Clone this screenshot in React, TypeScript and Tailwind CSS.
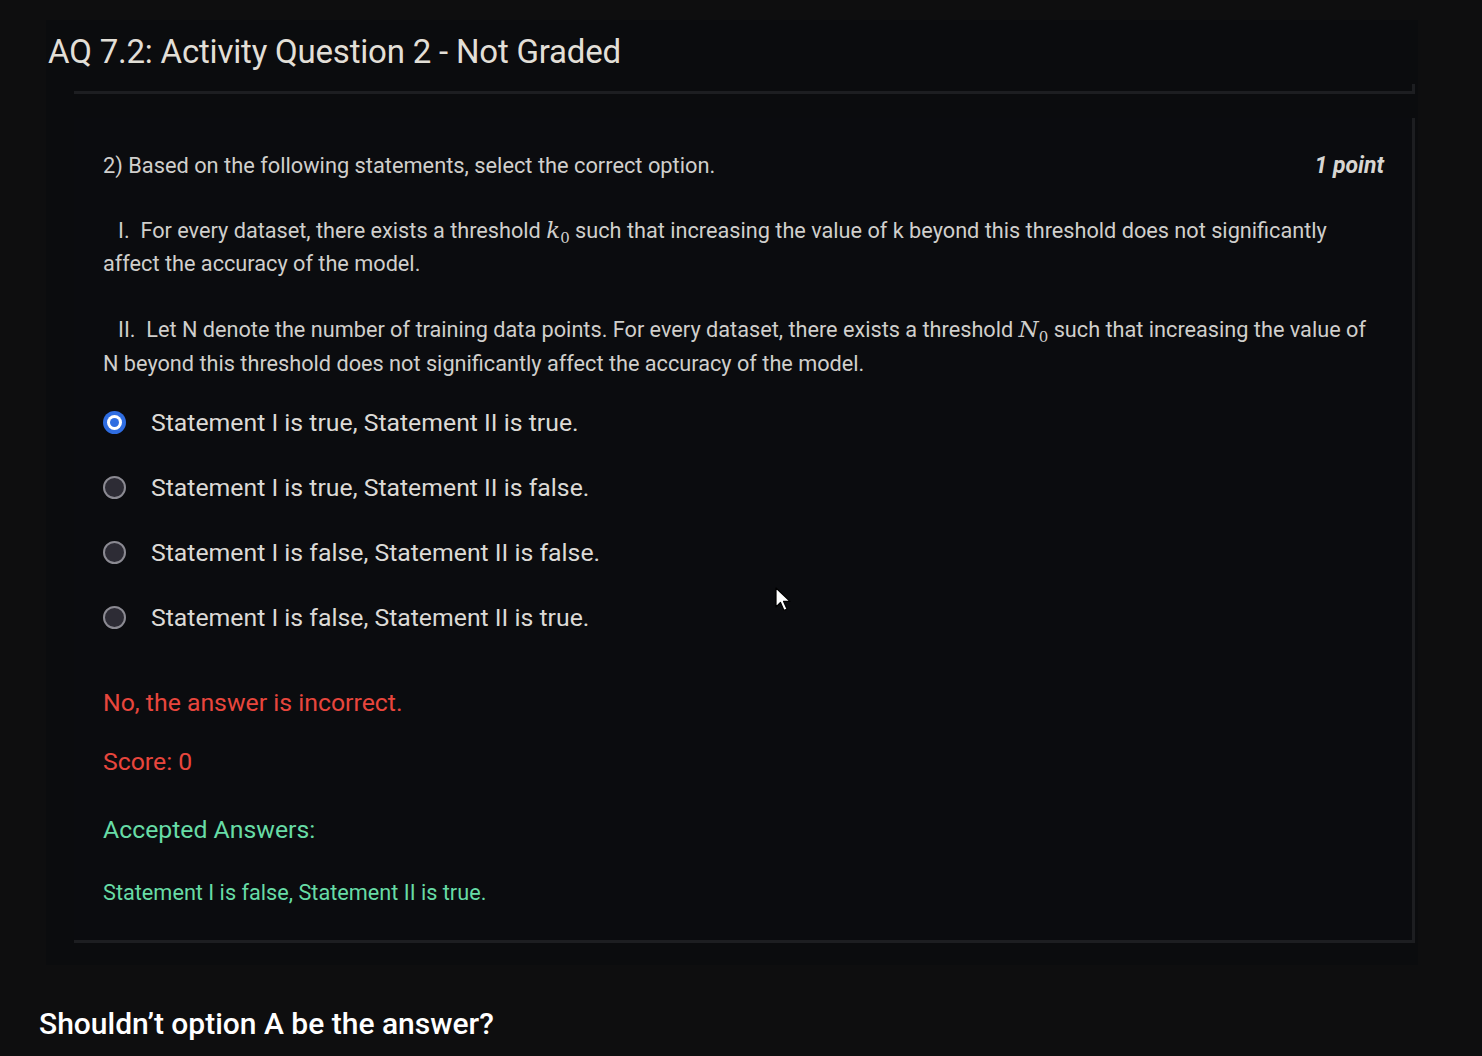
import React from "react";

function Radio({ selected }: { selected?: boolean }) {
  if (selected) {
    return (
      <span className="flex h-[23px] w-[23px] items-center justify-center rounded-full bg-[#2f6de1]">
        <span className="flex h-[15px] w-[15px] items-center justify-center rounded-full bg-white">
          <span className="h-[9px] w-[9px] rounded-full bg-[#2f6de1]" />
        </span>
      </span>
    );
  }
  return <span className="h-[23px] w-[23px] rounded-full border-[2.5px] border-[#8b8a92] bg-[#2d2c35]" />;
}

function M({ base }: { base: string }) {
  return (
    <span className="whitespace-nowrap leading-[0]" style={{ fontFamily: '"DejaVu Serif", "Liberation Serif", serif' }}>
      <span className="italic text-[23px] leading-[0]">{base}</span>
      <span className="relative top-[5px] text-[15px] leading-[0]">0</span>
    </span>
  );
}

export default function App() {
  const options = [
    { t: "Statement I is true, Statement II is true.", s: true },
    { t: "Statement I is true, Statement II is false." },
    { t: "Statement I is false, Statement II is false." },
    { t: "Statement I is false, Statement II is true." },
  ];
  return (
    <div
      className="relative min-h-[1056px] w-full overflow-hidden bg-[#0e0e0f] pt-[20px]"
      style={{ fontFamily: 'Roboto, "Liberation Sans", sans-serif' }}
    >
      <div className="ml-[46px] mr-[64px] bg-[#0b0c0e] pb-[22px]">
        <h1 className="pl-[2px] text-[33px] leading-[64px] tracking-[-0.2px] text-[#e2dfd7]">
          AQ 7.2: Activity Question 2 - Not Graded
        </h1>
        <div className="ml-[28px] mr-[3px] h-[10px] border-b-[3px] border-r-[3px] border-[#1d1e21]" />
        <div className="ml-[28px] mr-[3px] mt-[24px] border-b-[3px] border-r-[3px] border-[#1d1e21] bg-[#0b0c0f] pl-[29px] pr-[28px] pb-[30px] pt-[33px] text-[#d0cfcc]">
          <div className="flex items-center justify-between text-[21.8px] leading-[30px]">
            <span>2) Based on the following statements, select the correct option.</span>
            <span className="text-[23px] font-bold italic text-[#d8d6d2]">1 point</span>
          </div>
          <p className="mt-[33px] text-[21.7px] leading-[33px]">
            <span className="pl-[15px]">I.&nbsp; For every dataset, there exists a threshold </span>
            <M base="k" /> such that increasing the value of k beyond this threshold does not significantly affect the
            accuracy of the model.
          </p>
          <p className="mt-[33px] text-[21.7px] leading-[34px]">
            <span className="pl-[15px]">II.&nbsp; Let N denote the number of training data points. For every dataset, there exists a threshold </span>
            <M base="N" /> such that increasing the value of N beyond this threshold does not significantly affect the
            accuracy of the model.
          </p>
          <div className="mt-[25px] flex flex-col gap-[32px]">
            {options.map((o, i) => (
              <div key={i} className="flex h-[33px] items-center">
                <span className="flex w-[48px] items-center">
                  <Radio selected={o.s} />
                </span>
                <span className="text-[24.8px] text-[#dcdad6]">{o.t}</span>
              </div>
            ))}
          </div>
          <p className="mt-[52px] text-[24.8px] leading-[34px] text-[#e8463d]">No, the answer is incorrect.</p>
          <p className="mt-[25px] text-[24.8px] leading-[34px] text-[#e8463d]">Score: 0</p>
          <p className="mt-[34px] text-[24.8px] leading-[34px] text-[#67dca6]">Accepted Answers:</p>
          <p className="mt-[29px] text-[21.7px] leading-[34px] text-[#67dca6]">Statement I is false, Statement II is true.</p>
        </div>
      </div>
      <p className="ml-[39px] mt-[39px] text-[30px] font-medium leading-[40px] text-white">
        Shouldn’t option A be the answer?
      </p>
      <svg
        className="absolute left-[775px] top-[587px]"
        width="20"
        height="28"
        viewBox="0 0 20 28"
      >
        <path d="M1 1 L1 20 L5.5 15.5 L9 23.5 L12 22 L8.6 14.4 L15 14.4 Z" fill="#fff" stroke="#000" strokeWidth="1.2" strokeLinejoin="round" />
      </svg>
    </div>
  );
}
